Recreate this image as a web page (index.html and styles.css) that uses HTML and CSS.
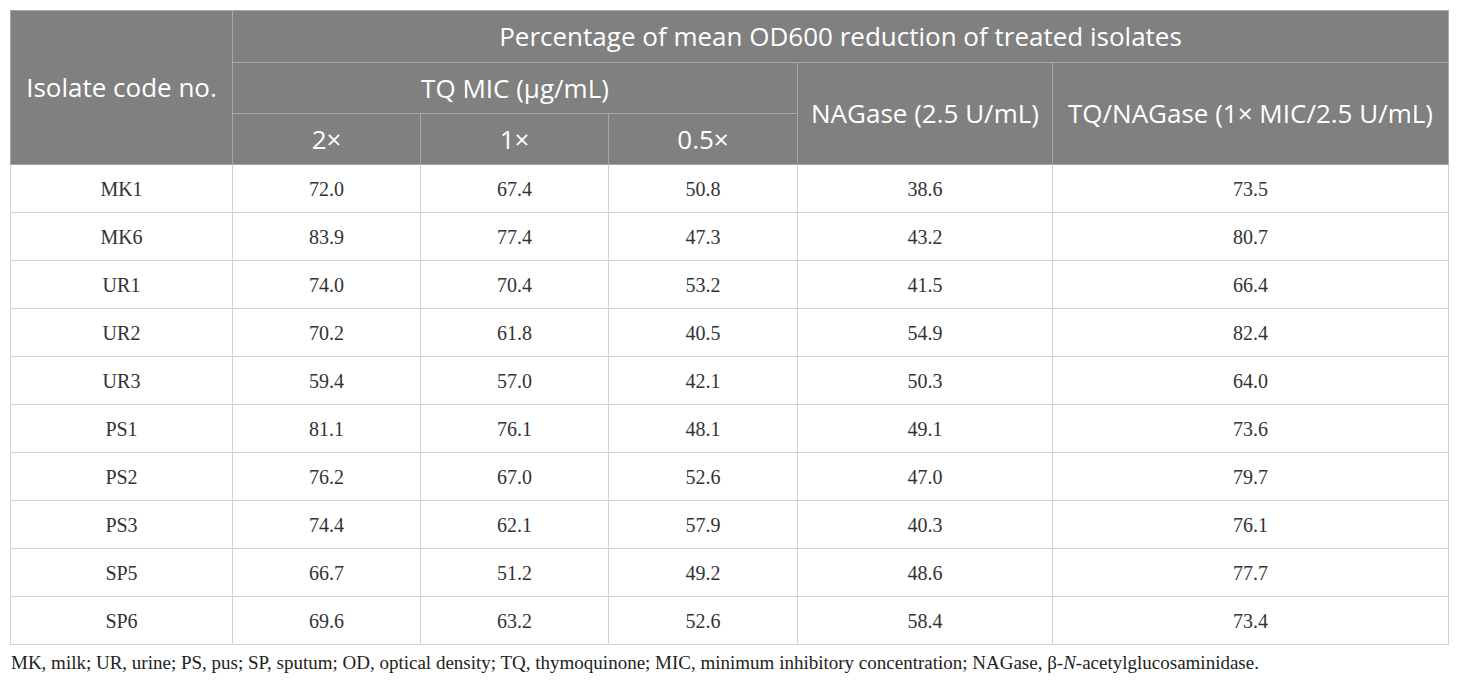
FILE: index.html
```html
<!DOCTYPE html>
<html>
<head>
<meta charset="utf-8">
<link rel="stylesheet" href="styles.css">
</head>
<body>
<div class="wrap">
<table class="data">
  <colgroup>
    <col class="c1"><col class="c2"><col class="c3"><col class="c4"><col class="c5"><col class="c6">
  </colgroup>
  <thead>
    <tr class="h1">
      <th rowspan="3">Isolate code no.</th>
      <th colspan="5">Percentage of mean OD600 reduction of treated isolates</th>
    </tr>
    <tr class="h2">
      <th colspan="3">TQ MIC (μg/mL)</th>
      <th rowspan="2">NAGase (2.5 U/mL)</th>
      <th rowspan="2">TQ/NAGase (1× MIC/2.5 U/mL)</th>
    </tr>
    <tr class="h3">
      <th>2×</th>
      <th>1×</th>
      <th>0.5×</th>
    </tr>
  </thead>
  <tbody>
    <tr><td>MK1</td><td>72.0</td><td>67.4</td><td>50.8</td><td>38.6</td><td>73.5</td></tr>
    <tr><td>MK6</td><td>83.9</td><td>77.4</td><td>47.3</td><td>43.2</td><td>80.7</td></tr>
    <tr><td>UR1</td><td>74.0</td><td>70.4</td><td>53.2</td><td>41.5</td><td>66.4</td></tr>
    <tr><td>UR2</td><td>70.2</td><td>61.8</td><td>40.5</td><td>54.9</td><td>82.4</td></tr>
    <tr><td>UR3</td><td>59.4</td><td>57.0</td><td>42.1</td><td>50.3</td><td>64.0</td></tr>
    <tr><td>PS1</td><td>81.1</td><td>76.1</td><td>48.1</td><td>49.1</td><td>73.6</td></tr>
    <tr><td>PS2</td><td>76.2</td><td>67.0</td><td>52.6</td><td>47.0</td><td>79.7</td></tr>
    <tr><td>PS3</td><td>74.4</td><td>62.1</td><td>57.9</td><td>40.3</td><td>76.1</td></tr>
    <tr><td>SP5</td><td>66.7</td><td>51.2</td><td>49.2</td><td>48.6</td><td>77.7</td></tr>
    <tr><td>SP6</td><td>69.6</td><td>63.2</td><td>52.6</td><td>58.4</td><td>73.4</td></tr>
  </tbody>
</table>
<p class="note">MK, milk; UR, urine; PS, pus; SP, sputum; OD, optical density; TQ, thymoquinone; MIC, minimum inhibitory concentration; NAGase, β-<i>N</i>-acetylglucosaminidase.</p>
</div>
</body>
</html>
```
FILE: styles.css
```css
html, body {
  margin: 0;
  padding: 0;
  background: #ffffff;
}
.wrap {
  padding: 10px 12px 0 10px;
}
.data {
  border-collapse: collapse;
  table-layout: fixed;
  width: 1438px;
  border: 1px solid #c8c8c8;
}
.c1 { width: 222px; }
.c2 { width: 188px; }
.c3 { width: 188px; }
.c4 { width: 189px; }
.c5 { width: 255px; }
.c6 { width: 396px; }
.data th {
  background: #808080;
  color: #ffffff;
  font-family: "Open Sans", "Noto Sans", sans-serif;
  font-weight: 400;
  font-size: 26px;
  line-height: 1.1;
  padding: 0;
  text-align: center;
  border: 1px solid #a8a8a8;
  white-space: nowrap;
}
.data thead tr { height: 51px; }
.data thead tr.h1 { height: 52px; }
.data td {
  font-family: "Liberation Serif", "Times New Roman", serif;
  font-size: 20px;
  line-height: 1.1;
  color: #333333;
  text-align: center;
  padding: 0;
  height: 47px;
  border: 1px solid #d2d2d2;
}
.note {
  margin: 7px 0 0 1px;
  font-family: "Liberation Serif", "Times New Roman", serif;
  font-size: 19px;
  line-height: 1.2;
  color: #222222;
}
```
